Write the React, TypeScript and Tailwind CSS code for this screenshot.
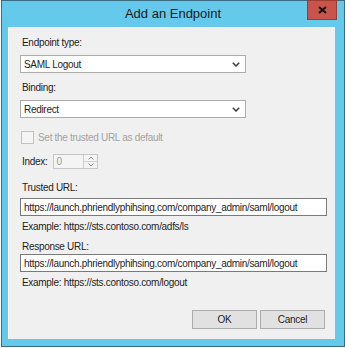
import React from "react";

const Chevron: React.FC = () => (
  <svg width="8" height="5" viewBox="0 0 8 5" className="shrink-0">
    <polyline points="0.8,0.8 4,4 7.2,0.8" fill="none" stroke="#3c3c3c" strokeWidth="1.5" />
  </svg>
);

const Select: React.FC<{ value: string }> = ({ value }) => (
  <div className="ml-[11px] flex h-[18px] w-[226px] items-center justify-between border border-[#acacac] bg-white pl-[3px] pr-[5px]">
    <span>{value}</span>
    <Chevron />
  </div>
);

const TextBox: React.FC<{ value: string }> = ({ value }) => (
  <div className="ml-[11px] flex h-[18px] w-[307px] items-center overflow-hidden border border-[#7a7a7a] bg-white pl-[3px]">
    <span className="whitespace-nowrap">{value}</span>
  </div>
);

const Label: React.FC<{ children: React.ReactNode; className?: string }> = ({ children, className }) => (
  <div className={"ml-[13px] h-[14px] leading-[14px] " + (className ?? "")}>{children}</div>
);

const App: React.FC = () => {
  return (
    <div className="h-[348px] w-[345px] bg-white">
      <div className="ml-[1px] flex h-[347px] w-[344px] flex-col border border-[#3b6d82] bg-[#64c9ea]">
        {/* title bar */}
        <div className="relative flex h-[26px] shrink-0 items-center justify-center">
          <span className="text-[13px] text-[#1b1b1b]" style={{ fontFamily: '"Liberation Sans", Arial, sans-serif' }}>
            Add an Endpoint
          </span>
          <div className="absolute right-[7px] top-[-1px] flex h-[20px] w-[30px] items-center justify-center border border-[#9e3b33] bg-[#c9544b]">
            <svg width="9" height="8" viewBox="0 0 9 8">
              <path d="M1 1 L8 7 M8 1 L1 7" stroke="#111" strokeWidth="2" />
            </svg>
          </div>
        </div>

        {/* client area */}
        <div
          className="ml-[6px] mr-[9px] flex h-[312px] flex-col border-l border-t border-white bg-[#f0f0f0] text-[10px] tracking-[-0.3px] text-[#1e1e1e]"
          style={{ fontFamily: '"Liberation Sans", Arial, sans-serif' }}
        >
          <Label className="mt-[8px]">Endpoint type:</Label>
          <div className="mt-[5px]">
            <Select value="SAML Logout" />
          </div>
          <Label className="mt-[8px]">Binding:</Label>
          <div className="mt-[5px]">
            <Select value="Redirect" />
          </div>

          <div className="ml-[12px] mt-[12px] flex h-[14px] items-center gap-[4px] text-[#a2a2a2]">
            <div className="h-[13px] w-[13px] border border-[#c2c2c2] bg-[#f4f4f4]" />
            <span>Set the trusted URL as default</span>
          </div>

          <div className="ml-[13px] mt-[10px] flex h-[15px] items-center gap-[6px]">
            <span>Index:</span>
            <div className="flex h-[15px] w-[45px] items-stretch border border-[#c6c6c6] bg-[#f4f4f4]">
              <span className="flex-1 pl-[2px] leading-[13px] text-[#9a9a9a]">0</span>
              <div className="flex w-[14px] flex-col border-l border-[#d0d0d0]">
                <div className="flex flex-1 items-center justify-center border-b border-[#d0d0d0]">
                  <svg width="6" height="4" viewBox="0 0 6 4">
                    <polyline points="0.5,3.5 3,1 5.5,3.5" fill="none" stroke="#8a8a8a" strokeWidth="1" />
                  </svg>
                </div>
                <div className="flex flex-1 items-center justify-center">
                  <svg width="6" height="4" viewBox="0 0 6 4">
                    <polyline points="0.5,0.5 3,3 5.5,0.5" fill="none" stroke="#8a8a8a" strokeWidth="1" />
                  </svg>
                </div>
              </div>
            </div>
          </div>

          <Label className="mt-[12px]">Trusted URL:</Label>
          <div className="mt-[3px]">
            <TextBox value="https://launch.phriendlyphihsing.com/company_admin/saml/logout" />
          </div>
          <Label className="mt-[4px]">Example: https://sts.contoso.com/adfs/ls</Label>
          <Label className="mt-[6px]">Response URL:</Label>
          <div>
            <TextBox value="https://launch.phriendlyphihsing.com/company_admin/saml/logout" />
          </div>
          <Label className="mt-[4px]">Example: https://sts.contoso.com/logout</Label>

          <div className="ml-[183px] mt-[20px] flex gap-[3px]">
            <div className="flex h-[19px] w-[65px] items-center justify-center border border-[#adadad] bg-[#e1e1e1]">OK</div>
            <div className="flex h-[19px] w-[65px] items-center justify-center border border-[#adadad] bg-[#e1e1e1]">Cancel</div>
          </div>
        </div>
      </div>
    </div>
  );
};

export default App;
